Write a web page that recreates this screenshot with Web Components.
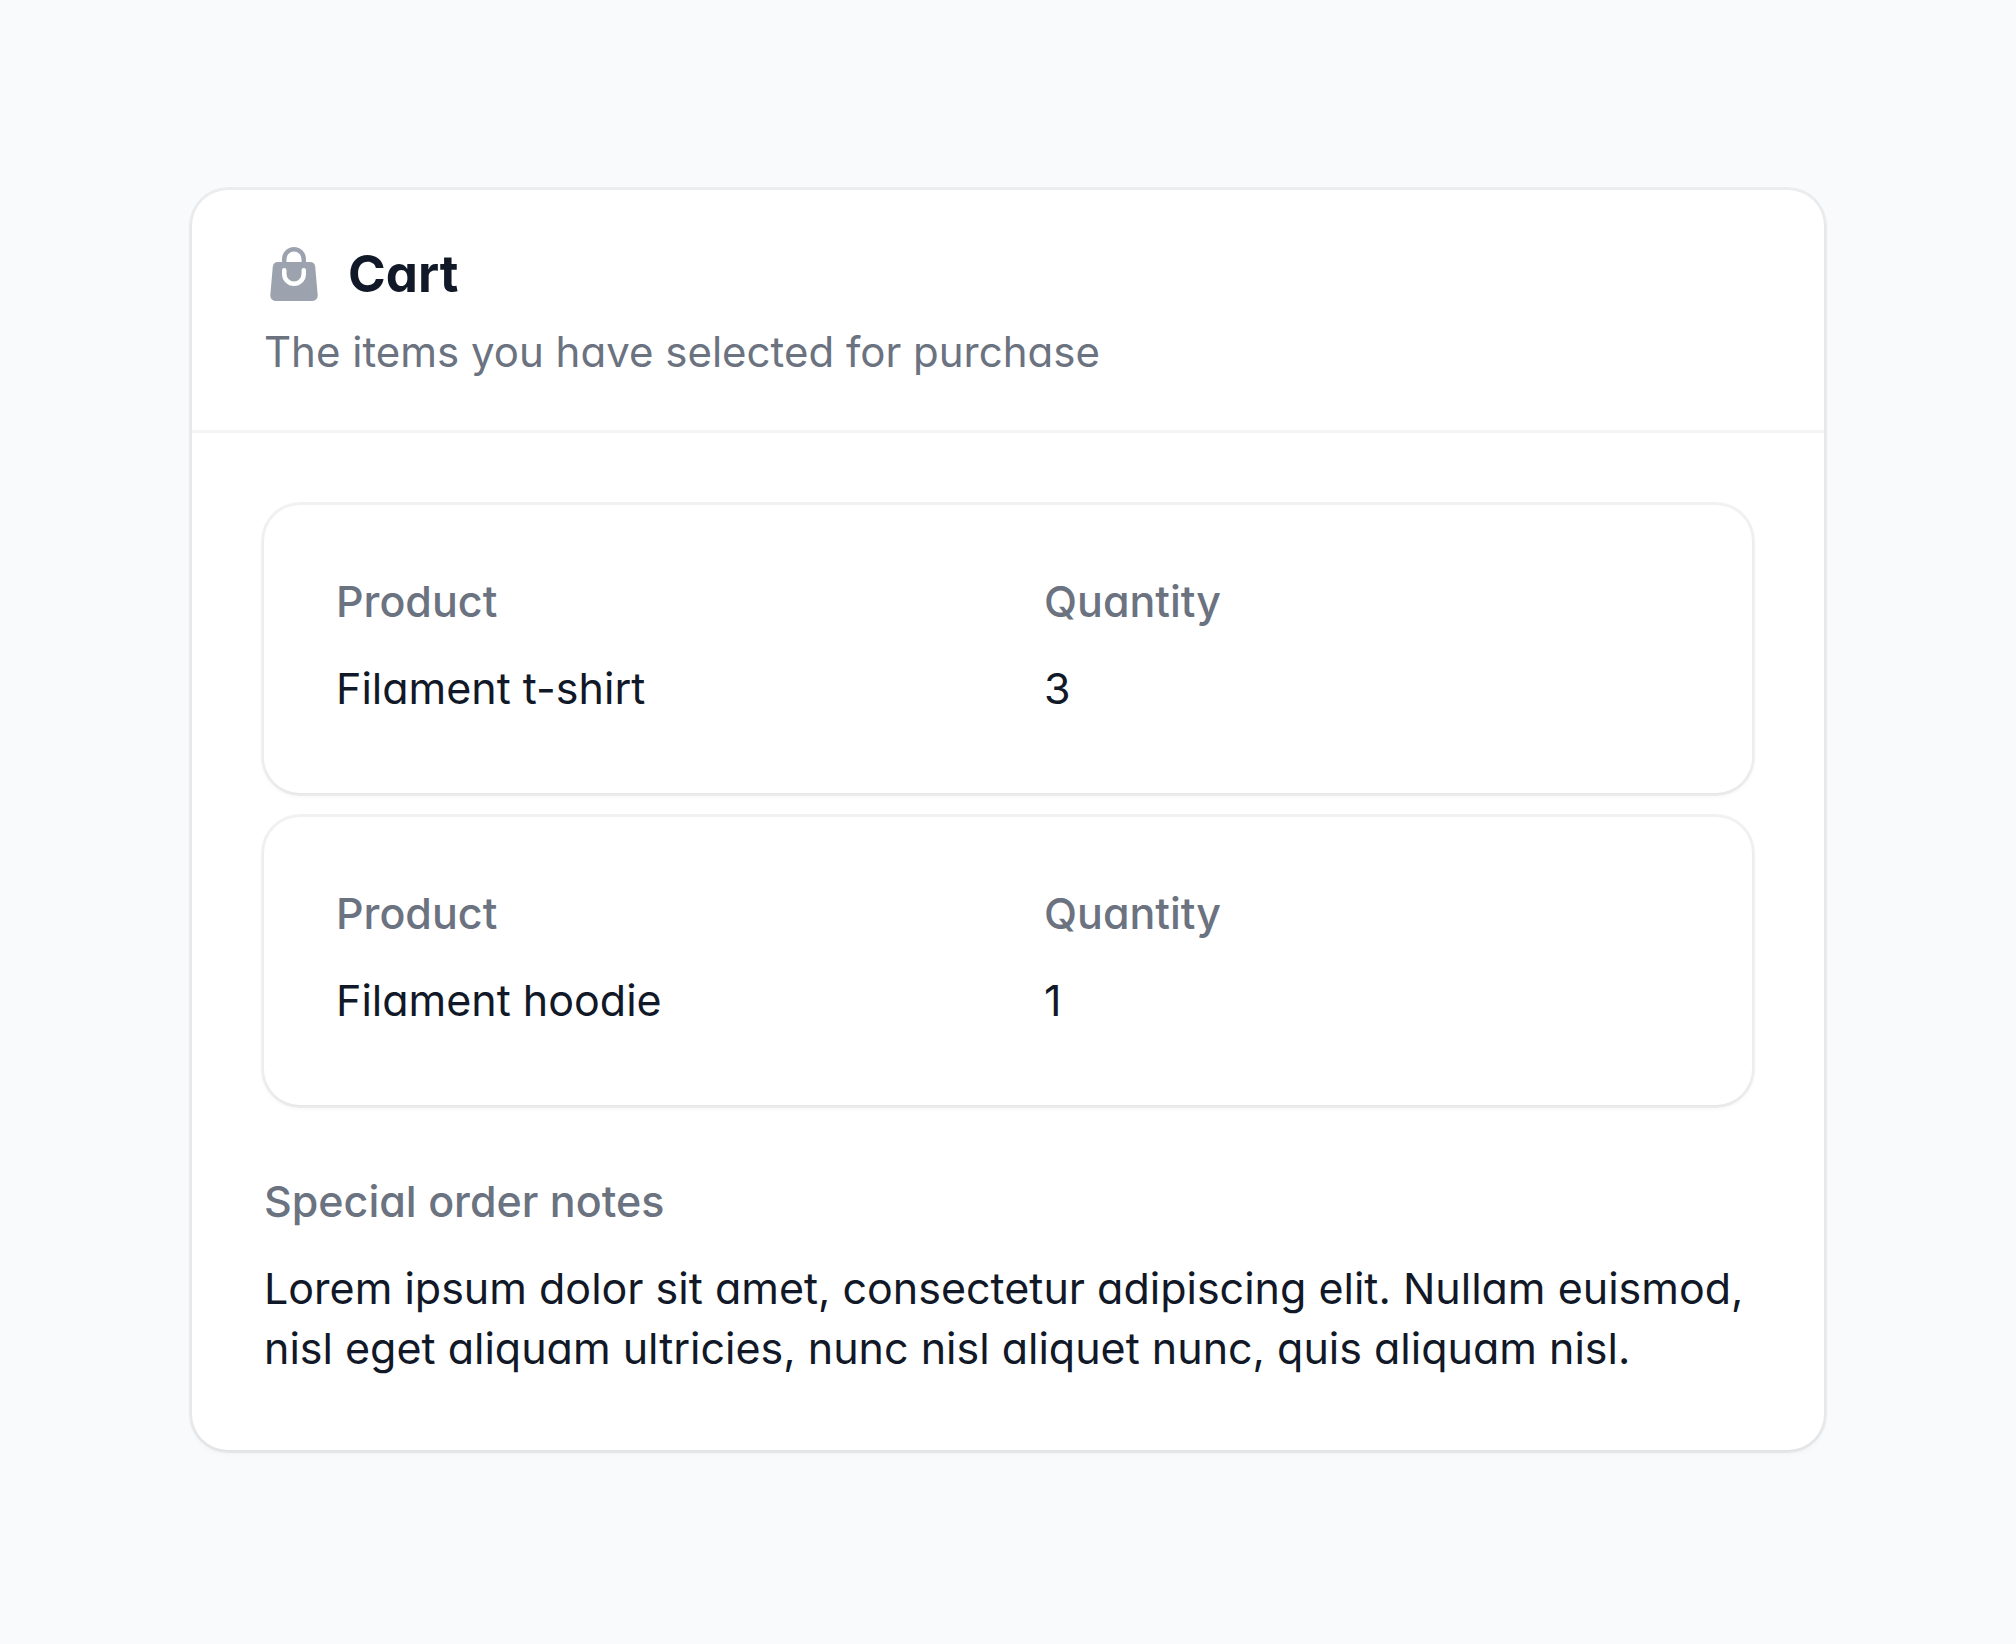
<!DOCTYPE html>
<html lang="en">
<head>
<meta charset="utf-8">
<meta name="viewport" content="width=device-width, initial-scale=1">
<title>Cart</title>
<style>
  body {
    margin: 0;
    min-height: 100vh;
    box-sizing: border-box;
    padding: 190px 192px;
    background: #f9fafb;
    color: #111827;
    font-family: Inter, "Liberation Sans", sans-serif;
    font-size: 43px;
    line-height: 60px;
    font-feature-settings: "cv11";
  }
</style>
</head>
<body>
<cart-section>
  <bag-icon slot="icon"></bag-icon>
  <span slot="heading">Cart</span>
  <span slot="description">The items you have selected for purchase</span>
  <cart-items>
    <cart-item>
      <info-entry label="Product">Filament t-shirt</info-entry>
      <info-entry label="Quantity">3</info-entry>
    </cart-item>
    <cart-item>
      <info-entry label="Product">Filament hoodie</info-entry>
      <info-entry label="Quantity">1</info-entry>
    </cart-item>
  </cart-items>
  <info-entry label="Special order notes">Lorem ipsum dolor sit amet, consectetur adipiscing elit. Nullam euismod, nisl eget aliquam ultricies, nunc nisl aliquet nunc, quis aliquam nisl.</info-entry>
</cart-section>
<script>
  const surface = `
    background: #fff;
    border-radius: 36px;
    box-shadow: 0 0 0 3px rgb(3 7 18 / .05), 0 3px 6px rgb(0 0 0 / .05);`;

  function define(name, html, setup) {
    customElements.define(name, class extends HTMLElement {
      connectedCallback() {
        if (this.shadowRoot) return;
        const root = this.attachShadow({ mode: "open" });
        root.innerHTML = html;
        if (setup) setup(this, root);
      }
    });
  }

  define("bag-icon", `
    <style>
      :host { display: block; flex: none; width: 60px; height: 60px; color: #9ca3af; }
      svg { display: block; width: 100%; height: 100%; }
    </style>
    <svg viewBox="0 0 20 20" fill="currentColor" aria-hidden="true">
      <path fill-rule="evenodd" clip-rule="evenodd" d="M6 5v1H4.667a1.75 1.75 0 0 0-1.743 1.598l-.826 9.5A1.75 1.75 0 0 0 3.84 19H16.16a1.75 1.75 0 0 0 1.743-1.902l-.826-9.5A1.75 1.75 0 0 0 15.333 6H14V5a4 4 0 0 0-8 0Zm4-2.5A2.5 2.5 0 0 0 7.5 5v1h5V5A2.5 2.5 0 0 0 10 2.5ZM7.5 10a2.5 2.5 0 0 0 5 0V8.75a.75.75 0 0 1 1.5 0V10a4 4 0 0 1-8 0V8.75a.75.75 0 0 1 1.5 0V10Z"/>
    </svg>`);

  define("cart-section", `
    <style>
      :host { display: block; ${surface} }
      header { display: flex; flex-direction: column; gap: 12px; padding: 48px 72px; }
      .title { display: flex; align-items: center; gap: 24px; }
      h2 { margin: 0; font-size: 51px; line-height: 72px; font-weight: 700; }
      p { margin: 0; font-size: 42px; color: #6b7280; }
      .content { display: flex; flex-direction: column; gap: 72px; padding: 72px; border-top: 3px solid #f3f4f6; }
    </style>
    <section aria-labelledby="heading">
      <header>
        <div class="title"><slot name="icon"></slot><h2 id="heading"><slot name="heading"></slot></h2></div>
        <p><slot name="description"></slot></p>
      </header>
      <div class="content"><slot></slot></div>
    </section>`);

  define("cart-items", `
    <style>:host { display: grid; gap: 24px; }</style>
    <slot></slot>`);

  define("cart-item", `
    <style>
      :host { display: grid; grid-template-columns: repeat(2, minmax(0, 1fr)); gap: 72px; padding: 72px; ${surface} }
    </style>
    <slot></slot>`);

  define("info-entry", `
    <style>
      :host { display: block; }
      dl { display: grid; gap: 33px; margin: 0; }
      dt { line-height: 48px; font-weight: 500; color: #6b7280; }
      dd { margin: 0; min-height: 63px; }
    </style>
    <dl><dt></dt><dd><slot></slot></dd></dl>`,
    (host, root) => { root.querySelector("dt").textContent = host.getAttribute("label"); });
</script>
</body>
</html>
